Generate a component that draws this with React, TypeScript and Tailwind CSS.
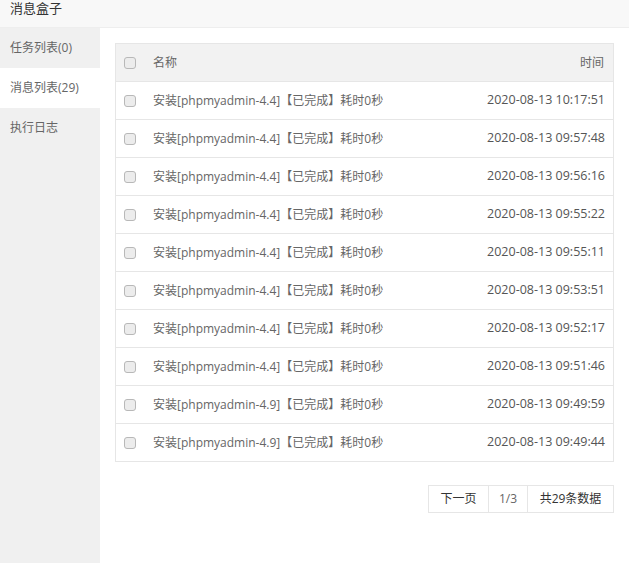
const rows = [
  ["4.4", "2020-08-13 10:17:51"],
  ["4.4", "2020-08-13 09:57:48"],
  ["4.4", "2020-08-13 09:56:16"],
  ["4.4", "2020-08-13 09:55:22"],
  ["4.4", "2020-08-13 09:55:11"],
  ["4.4", "2020-08-13 09:53:51"],
  ["4.4", "2020-08-13 09:52:17"],
  ["4.4", "2020-08-13 09:51:46"],
  ["4.9", "2020-08-13 09:49:59"],
  ["4.9", "2020-08-13 09:49:44"],
];

function Check() {
  return <span className="block w-[12px] h-[12px] rounded-[3px] border border-[#b8b8b8] bg-[#ececec]" />;
}

export default function App() {
  return (
    <div
      className="w-[629px] h-[563px] bg-white flex flex-col text-[#666] overflow-hidden"
      style={{ fontFamily: '"Open Sans", "Noto Sans CJK SC", sans-serif' }}
    >
      <div className="h-[28px] shrink-0 bg-[#f8f8f8] border-b border-[#eee] px-[10px] pt-[1px] text-[13px] leading-[14px] text-[#333]">
        消息盒子
      </div>
      <div className="flex flex-1">
        <div className="w-[100px] bg-[#f0f0f0] flex flex-col text-[12px]">
          <div className="h-[40px] flex items-center px-[10px]">任务列表(0)</div>
          <div className="h-[40px] flex items-center px-[10px] bg-white">消息列表(29)</div>
          <div className="h-[40px] flex items-center px-[10px]">执行日志</div>
        </div>
        <div className="flex-1 px-[15px] pt-[15px]">
          <div className="border border-[#e6e6e6] text-[12px]">
            <div className="h-[37px] flex items-center bg-[#f2f2f2] px-[8px]">
              <Check />
              <span className="ml-[17px] flex-1">名称</span>
              <span className="mr-[1px]">时间</span>
            </div>
            {rows.map(([v, t], i) => (
              <div key={i} className="h-[38px] flex items-center border-t border-[#e6e6e6] px-[8px]">
                <Check />
                <span className="ml-[17px] flex-1">安装[phpmyadmin-{v}]【已完成】耗时0秒</span>
                <span className="text-[12.5px] text-[#555]">{t}</span>
              </div>
            ))}
          </div>
          <div className="flex justify-end mt-[23px] text-[12px] text-[#333]">
            <div className="flex border border-[#e6e6e6] h-[28px]">
              <span className="w-[59px] flex items-center justify-center">下一页</span>
              <span className="w-[39px] flex items-center justify-center border-l border-[#e6e6e6] text-[#666]">1/3</span>
              <span className="w-[86px] flex items-center justify-center border-l border-[#e6e6e6]">共29条数据</span>
            </div>
          </div>
        </div>
      </div>
    </div>
  );
}
